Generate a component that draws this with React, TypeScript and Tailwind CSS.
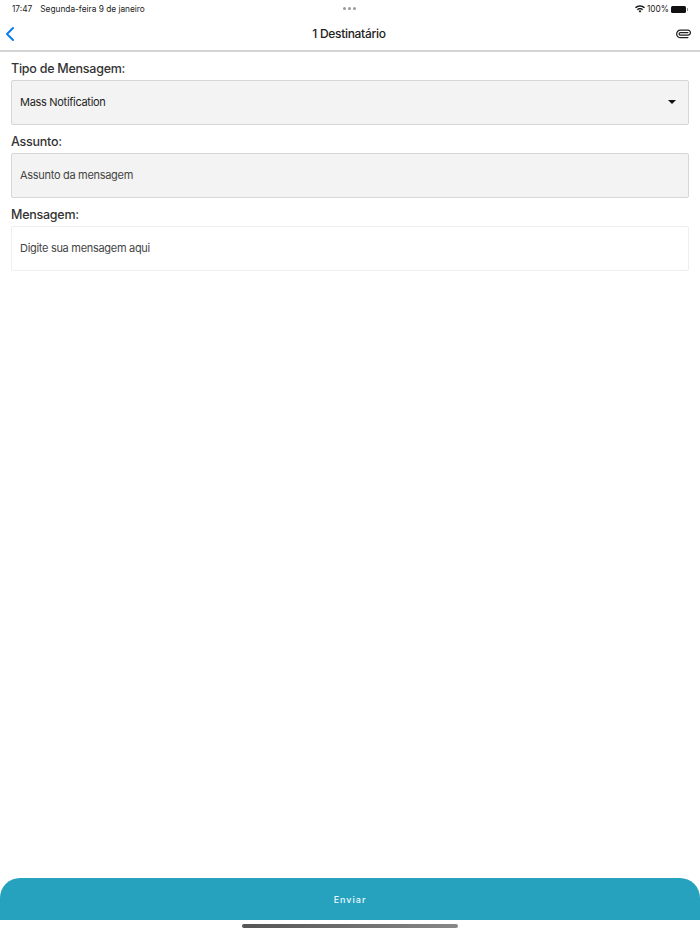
import { ChevronLeft, Paperclip } from "lucide-react";

function Field({ label, text, bg, border, dark, select }: { label: string; text: string; bg: string; border: string; dark?: boolean; select?: boolean }) {
  return (
    <div className="flex flex-col">
      <label className="h-[28px] pt-[7px] text-[12.5px] leading-[20px] font-medium tracking-[-0.25px] text-[#333333]">{label}</label>
      <div className={`${bg} ${border} h-[45px] border rounded-[2px] pl-[8px] pr-[12px] flex items-center justify-between`}>
        <span className={`text-[11px] tracking-[-0.3px] ${dark ? "text-[#1f1f1f]" : "text-[#444444]"}`}>{text}</span>
        {select && <div className="w-0 h-0 mb-[2px] border-x-[4px] border-x-transparent border-t-[4px] border-t-[#111111]" />}
      </div>
    </div>
  );
}

export default function App() {
  return (
    <div className="w-[700px] h-[934px] bg-white flex flex-col font-['Inter',sans-serif] overflow-hidden">
      {/* Status bar */}
      <div className="h-[17px] relative flex items-center justify-between pl-[12px] pr-[12px] text-[8.3px] text-[#222222]">
        <div className="flex gap-[8px] pt-[1px]">
          <span>17:47</span>
          <span>Segunda-feira 9 de janeiro</span>
        </div>
        <div className="absolute left-[343px] top-[7px] flex gap-[2px]">
          <span className="w-[3px] h-[3px] rounded-full bg-[#9a9a9a]" />
          <span className="w-[3px] h-[3px] rounded-full bg-[#9a9a9a]" />
          <span className="w-[3px] h-[3px] rounded-full bg-[#9a9a9a]" />
        </div>
        <div className="flex items-center gap-[2px] pt-[1px]">
          <svg width="10" height="8" viewBox="0 0 11 8" fill="#111111">
            <path d="M5.5 0C3.4 0 1.5.8 0 2.2l1 1.1C2.2 2.1 3.8 1.5 5.5 1.5s3.3.6 4.5 1.8l1-1.1C9.5.8 7.6 0 5.5 0z" />
            <path d="M5.5 2.8c-1.3 0-2.5.5-3.4 1.4l1 1.1c.7-.6 1.5-1 2.4-1s1.7.4 2.4 1l1-1.1C8 3.3 6.8 2.8 5.5 2.8z" />
            <path d="M5.5 5.5c-.6 0-1.1.2-1.5.6L5.5 8 7 6.1c-.4-.4-.9-.6-1.5-.6z" />
          </svg>
          <span>100%</span>
          <div className="flex items-center">
            <div className="w-[15px] h-[7px] rounded-[1.5px] bg-[#111111]" />
            <div className="w-[1px] h-[3px] bg-[#999999] ml-[1px]" />
          </div>
        </div>
      </div>

      {/* Header */}
      <div className="h-[35px] flex items-center justify-between pl-0 pr-[9px] border-b-2 border-[#d4d4d4]">
        <ChevronLeft size={24} strokeWidth={2} className="text-[#0a7cf0] -ml-[2px]" />
        <span className="pt-[1px] text-[12px] font-medium tracking-[-0.3px] text-[#222222]">1 Destinatário</span>
        <Paperclip size={15} strokeWidth={2} className="text-[#222222] rotate-[45deg]" />
      </div>

      {/* Form */}
      <div className="flex-1 px-[11px] flex flex-col">
        <Field label="Tipo de Mensagem:" text="Mass Notification" bg="bg-[#f3f3f3]" border="border-[#d6d6d6]" dark select />
        <Field label="Assunto:" text="Assunto da mensagem" bg="bg-[#f3f3f3]" border="border-[#d6d6d6]" />
        <Field label="Mensagem:" text="Digite sua mensagem aqui" bg="bg-white" border="border-[#eeeeee]" />
      </div>

      {/* Send button */}
      <div className="h-[42px] bg-[#26a2bf] rounded-t-[20px] flex items-center justify-center">
        <span className="pt-[1px] text-[9px] font-medium tracking-[1px] text-[#eef9fb]">Enviar</span>
      </div>
      <div className="h-[14px] flex items-start justify-center pt-[4px]">
        <div className="w-[216px] h-[4px] rounded-full bg-gradient-to-r from-[#555555] to-[#888888]" />
      </div>
    </div>
  );
}
